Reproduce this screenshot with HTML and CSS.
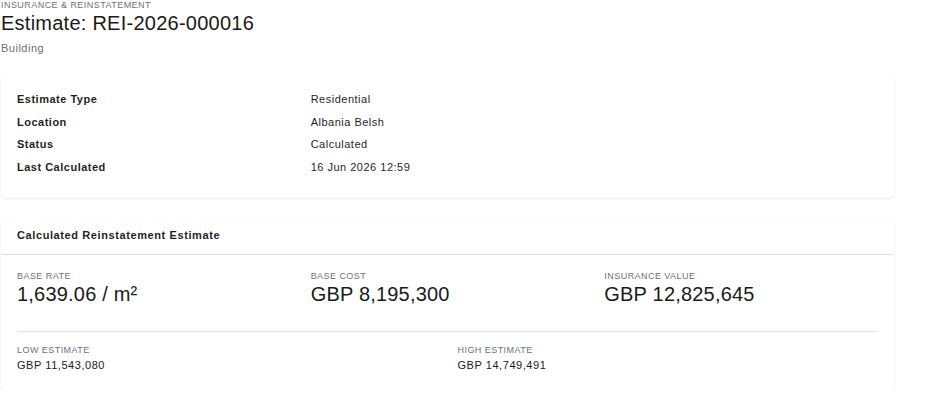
FILE: index.html
```html
<!DOCTYPE html>
<html>
<head>
<meta charset="utf-8">
<link rel="stylesheet" href="styles.css">
</head>
<body>
<div class="page">
  <header class="head">
    <div class="overline">INSURANCE &amp; REINSTATEMENT</div>
    <h1 class="title">Estimate: REI-2026-000016</h1>
    <div class="subtitle">Building</div>
  </header>

  <section class="card info">
    <div class="info-grid">
      <div class="k">Estimate Type</div><div class="v">Residential</div>
      <div class="k">Location</div><div class="v">Albania Belsh</div>
      <div class="k">Status</div><div class="v">Calculated</div>
      <div class="k">Last Calculated</div><div class="v">16 Jun 2026 12:59</div>
    </div>
  </section>

  <section class="card calc">
    <div class="card-head">Calculated Reinstatement Estimate</div>
    <div class="card-body">
      <div class="big-grid">
        <div class="metric">
          <div class="m-label">BASE RATE</div>
          <div class="m-value">1,639.06 / m²</div>
        </div>
        <div class="metric">
          <div class="m-label">BASE COST</div>
          <div class="m-value">GBP 8,195,300</div>
        </div>
        <div class="metric">
          <div class="m-label">INSURANCE VALUE</div>
          <div class="m-value">GBP 12,825,645</div>
        </div>
      </div>
      <hr class="divider">
      <div class="small-grid">
        <div class="metric">
          <div class="m-label">LOW ESTIMATE</div>
          <div class="s-value">GBP 11,543,080</div>
        </div>
        <div class="metric">
          <div class="m-label">HIGH ESTIMATE</div>
          <div class="s-value">GBP 14,749,491</div>
        </div>
      </div>
    </div>
  </section>
</div>
</body>
</html>
```

FILE: styles.css
```css
* { box-sizing: border-box; }
html, body { margin: 0; padding: 0; background: #fff; }
body {
  font-family: "Liberation Sans", Arial, sans-serif;
  color: #1f1f1f;
}
.page {
  width: 893px;
  margin-left: 1px;
}
.overline {
  font-size: 9px;
  line-height: 11px;
  color: #6f6f6f;
  letter-spacing: 0.45px;
}
.title {
  margin: 0;
  font-size: 20px;
  font-weight: 400;
  line-height: 24px;
  color: #1a1a1a;
  letter-spacing: 0.25px;
}
.subtitle {
  margin-top: 6px;
  font-size: 11px;
  line-height: 14px;
  color: #6f6f6f;
  letter-spacing: 0.5px;
}
.card {
  background: #fff;
  border-radius: 5px;
  box-shadow: 0 1px 3px rgba(0,0,0,0.08), 0 0 1px rgba(0,0,0,0.07);
}
.info {
  margin-top: 19px;
  padding: 17px 16px 23px;
}
.info-grid {
  display: grid;
  grid-template-columns: repeat(3, 1fr);
  column-gap: 20px;
  row-gap: 6px;
}
.info-grid .k, .info-grid .v {
  font-size: 11px;
  line-height: 16.6px;
  letter-spacing: 0.5px;
  color: #1f1f1f;
}
.info-grid .k { font-weight: 700; }
.info-grid .v { font-weight: 400; grid-column: span 2; }

.calc { margin-top: 19px; }
.card-head {
  padding: 12px 16px;
  font-size: 11px;
  line-height: 13px;
  font-weight: 700;
  letter-spacing: 0.6px;
  color: #1f1f1f;
  border-bottom: 1px solid #e0e0e0;
}
.card-body { padding: 14px 16px 17px; }
.big-grid {
  display: grid;
  grid-template-columns: repeat(3, 1fr);
  column-gap: 20px;
}
.small-grid {
  display: grid;
  grid-template-columns: repeat(2, 1fr);
  column-gap: 20px;
}
.m-label {
  font-size: 9px;
  line-height: 14px;
  color: #6b7280;
  letter-spacing: 0.45px;
}
.m-value {
  margin-top: 0;
  font-size: 20px;
  line-height: 23px;
  color: #1a1a1a;
  letter-spacing: 0.2px;
}
.s-value {
  font-size: 11px;
  line-height: 16px;
  letter-spacing: 0.55px;
  color: #1a1a1a;
}
.divider {
  border: 0;
  border-top: 1px solid #e0e0e0;
  margin: 25px 0 11px;
}
```
